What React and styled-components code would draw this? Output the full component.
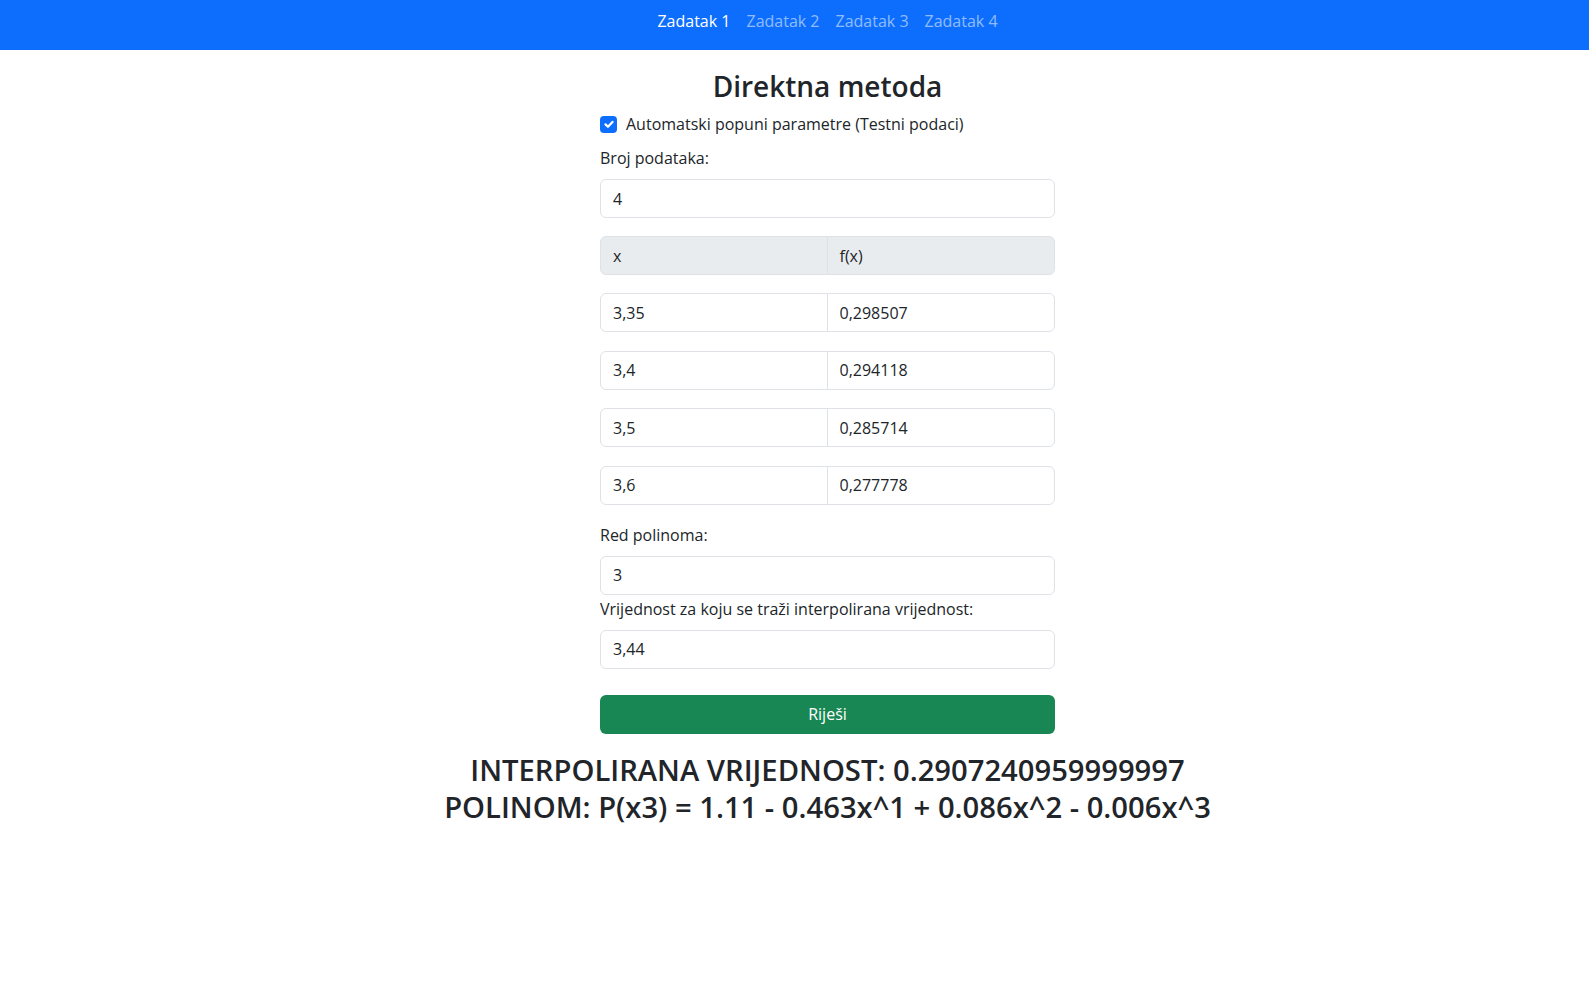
import React from "react";
import styled, { createGlobalStyle } from "styled-components";

const GlobalStyle = createGlobalStyle`
  html, body {
    margin: 0;
    padding: 0;
    background: #ffffff;
  }
  body {
    font-family: "Open Sans", "Noto Sans", sans-serif;
    font-size: 16px;
    line-height: 24px;
    color: #212529;
  }
  * { box-sizing: border-box; }
`;

const Navbar = styled.nav`
  height: 50px;
  background: #0d6efd;
  padding-left: 66px;
`;

const NavList = styled.ul`
  list-style: none;
  margin: 0;
  padding: 9px 0 0;
  display: flex;
  justify-content: center;
`;

const NavLink = styled.a`
  display: block;
  padding: 0 8px;
  line-height: 24px;
  font-size: 16px;
  text-decoration: none;
  color: ${(p) => (p.$active ? "#ffffff" : "rgba(255,255,255,0.55)")};
`;

const Main = styled.main`
  padding: 18px 0 40px 66px;
`;

const Form = styled.div`
  width: 455px;
  margin: 0 auto;
`;

const Title = styled.h3`
  margin: 0 0 8px;
  font-size: 28px;
  line-height: 36px;
  font-weight: 600;
  text-align: center;
`;

const CheckRow = styled.label`
  display: flex;
  align-items: center;
  gap: 9px;
  height: 24px;
  margin-bottom: 10px;
`;

const CheckBox = styled.span`
  width: 17px;
  height: 17px;
  border-radius: 4px;
  background: #0d6efd;
  display: flex;
  align-items: center;
  justify-content: center;
  flex-shrink: 0;
`;

const FieldLabel = styled.div`
  line-height: 24px;
  margin-top: ${(p) => p.$top || 0}px;
  margin-bottom: 9px;
`;

const Input = styled.div`
  height: 39px;
  border: 1px solid #dee2e6;
  border-radius: 6px;
  padding: 0 12px;
  display: flex;
  align-items: center;
  background: #ffffff;
`;

const Group = styled.div`
  display: grid;
  grid-template-columns: 1fr 1fr;
  height: 39px;
  margin-top: ${(p) => p.$top || 0}px;
  margin-bottom: 18.4px;
`;

const Cell = styled.div`
  border: 1px solid #dee2e6;
  padding: 0 12px;
  display: flex;
  align-items: center;
  background: ${(p) => (p.$head ? "#e9ecef" : "#ffffff")};
  border-radius: ${(p) => (p.$first ? "6px 0 0 6px" : "0 6px 6px 0")};
  ${(p) => (p.$first ? "" : "margin-left: -1px;")}
`;

const Button = styled.button`
  display: block;
  width: 100%;
  height: 39px;
  margin-top: 26px;
  border: none;
  border-radius: 6px;
  background: #198754;
  color: #ffffff;
  font-family: inherit;
  font-size: 16px;
`;

const Result = styled.h3`
  margin: 18px 0 0;
  font-size: 29.2px;
  line-height: 36.6px;
  font-weight: 600;
  text-align: center;
  white-space: nowrap;
`;

const rows = [
  ["3,35", "0,298507"],
  ["3,4", "0,294118"],
  ["3,5", "0,285714"],
  ["3,6", "0,277778"],
];

export default function App() {
  return (
    <>
      <GlobalStyle />
      <Navbar>
        <NavList>
          <li><NavLink $active href="#">Zadatak 1</NavLink></li>
          <li><NavLink href="#">Zadatak 2</NavLink></li>
          <li><NavLink href="#">Zadatak 3</NavLink></li>
          <li><NavLink href="#">Zadatak 4</NavLink></li>
        </NavList>
      </Navbar>
      <Main>
        <Form>
          <Title>Direktna metoda</Title>
          <CheckRow>
            <CheckBox>
              <svg width="14" height="14" viewBox="0 0 20 20">
                <path d="M5 10.5l3.5 3.5l6.5-7" fill="none" stroke="#fff" strokeWidth="3.2" strokeLinecap="round" strokeLinejoin="round" />
              </svg>
            </CheckBox>
            Automatski popuni parametre (Testni podaci)
          </CheckRow>
          <FieldLabel>Broj podataka:</FieldLabel>
          <Input>4</Input>
          <Group $top={18}>
            <Cell $head $first>x</Cell>
            <Cell $head>f(x)</Cell>
          </Group>
          {rows.map(([x, fx]) => (
            <Group key={x}>
              <Cell $first>{x}</Cell>
              <Cell>{fx}</Cell>
            </Group>
          ))}
          <FieldLabel>Red polinoma:</FieldLabel>
          <Input>3</Input>
          <FieldLabel $top={2}>Vrijednost za koju se traži interpolirana vrijednost:</FieldLabel>
          <Input>3,44</Input>
          <Button>Riješi</Button>
        </Form>
        <Result>
          INTERPOLIRANA VRIJEDNOST: 0.2907240959999997
          <br />
          POLINOM: P(x3) = 1.11 - 0.463x^1 + 0.086x^2 - 0.006x^3
        </Result>
      </Main>
    </>
  );
}
